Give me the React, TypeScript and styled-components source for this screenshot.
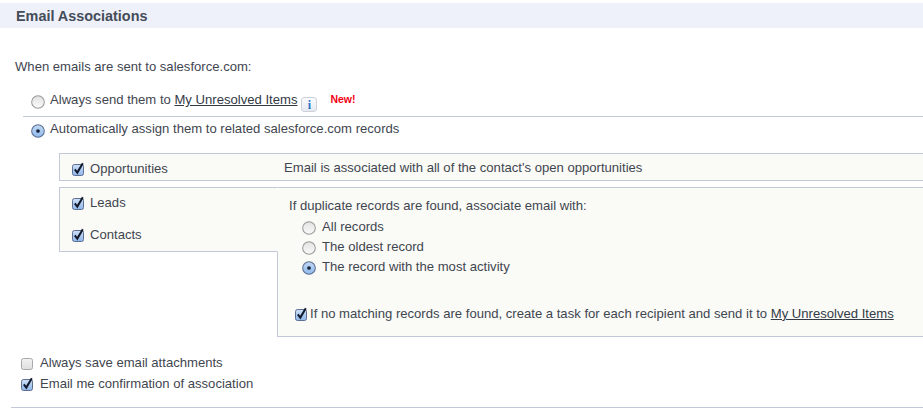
import React from 'react';
import styled, { createGlobalStyle } from 'styled-components';

const GlobalStyle = createGlobalStyle`
  html, body {
    margin: 0;
    padding: 0;
    background: #fff;
    overflow: hidden;
  }
  body {
    font-family: "Liberation Sans", Arial, sans-serif;
    font-size: 13.1px;
    color: #3f4650;
  }
`;

const borderColor = '#c3c9db';
const panelBg = '#fafaf6';

const Page = styled.div`
  width: 923px;
  height: 408px;
  padding-top: 3px;
  box-sizing: border-box;
  display: flex;
  flex-direction: column;
`;

const SectionHeader = styled.h2`
  margin: 0;
  height: 25px;
  padding-left: 16px;
  display: flex;
  align-items: center;
  background: #eef1f9;
  font-size: 14.4px;
  font-weight: bold;
  color: #444c58;
`;

const Intro = styled.p`
  margin: 31px 0 0 15px;
  height: 16px;
  line-height: 16px;
`;

const OptionsGroup = styled.div`
  margin: 17px 0 0 23px;
  display: flex;
  flex-direction: column;
  gap: 8px;
`;

const OptionRow = styled.div<{ $ruled?: boolean }>`
  display: flex;
  align-items: center;
  height: 16px;
  padding: ${p => (p.$ruled ? '4px 0 0 8px' : '0 0 0 8px')};
  border-top: ${p => (p.$ruled ? `1px solid ${borderColor}` : 'none')};
  line-height: 16px;
`;

const Link = styled.a`
  color: #333a46;
  text-decoration: underline;
`;

const InfoButton = styled.span`
  width: 14px;
  height: 13px;
  margin: 9px 0 0 4px;
  border: 1px solid #cdd2da;
  border-radius: 3px;
  background: linear-gradient(#fafbfd, #e6eaf0);
  display: flex;
  align-items: center;
  justify-content: center;
  font-family: "Liberation Serif", serif;
  font-size: 12px;
  font-weight: bold;
  color: #2a72c8;
`;

const NewBadge = styled.span`
  margin: -2px 0 0 13px;
  font-size: 10.5px;
  font-weight: bold;
  color: #f00014;
`;

const Panels = styled.div`
  margin: 16px 0 0 59px;
`;

const OpportunityPanel = styled.div`
  height: 26px;
  display: flex;
  align-items: center;
  background: ${panelBg};
  border-top: 1px solid ${borderColor};
  border-bottom: 1px solid ${borderColor};
  border-left: 1px solid ${borderColor};
`;

const OpportunityLabel = styled.div`
  width: 212px;
  margin-top: 2px;
  padding-left: 12px;
  display: flex;
  align-items: center;
  gap: 5px;
  flex-shrink: 0;
`;

const SplitPanel = styled.div`
  margin-top: 6px;
  display: flex;
  align-items: flex-start;
`;

/* sits over the left edge of the panel beside it, so the edge only shows below this block */
const RecordTypes = styled.div`
  position: relative;
  z-index: 1;
  width: 217px;
  height: 63px;
  margin-right: -1px;
  flex-shrink: 0;
  background: ${panelBg};
  border-top: 1px solid ${borderColor};
  border-left: 1px solid ${borderColor};
  border-bottom: 1px solid ${borderColor};
  border-right: 1px solid ${panelBg};
`;

const RecordType = styled.div`
  height: 16px;
  margin: 6px 0 0 12px;
  display: flex;
  align-items: center;
  gap: 5px;
  & + & {
    margin-top: 16px;
  }
`;

const DuplicateRules = styled.div`
  flex: 1;
  height: 150px;
  padding: 10px 0 0 11px;
  box-sizing: border-box;
  background: ${panelBg};
  border-top: 1px solid ${borderColor};
  border-left: 1px solid ${borderColor};
  border-bottom: 1px solid ${borderColor};
`;

const RuleTitle = styled.div`
  height: 16px;
  line-height: 16px;
`;

const RadioList = styled.div`
  margin: 4px 0 0 13px;
  display: flex;
  flex-direction: column;
  gap: 4px;
`;

const RadioItem = styled.div`
  height: 16px;
  display: flex;
  align-items: center;
  gap: 1px;
`;

const TaskRow = styled.div`
  margin: 31px 0 0 6px;
  height: 16px;
  display: flex;
  align-items: center;
  gap: 2px;
`;

const FooterOptions = styled.div`
  margin: 17px 0 0 21px;
  display: flex;
  flex-direction: column;
  gap: 5px;
`;

const FooterOption = styled.div`
  height: 16px;
  display: flex;
  align-items: center;
  gap: 6px;
`;

const BottomRule = styled.div`
  margin: auto 0 0 11px;
  height: 1px;
  background: ${borderColor};
`;

const RadioSvg = styled.svg`
  width: 14px;
  height: 14px;
  flex-shrink: 0;
  margin-right: 5px;
  margin-top: 4px;
`;

const CheckSvg = styled.svg`
  width: 13px;
  height: 14px;
  flex-shrink: 0;
  margin-top: 2px;
`;

const Radio: React.FC<{ checked?: boolean }> = ({ checked }) => (
  <RadioSvg viewBox="0 0 15 15">
    <defs>
      <linearGradient id="radioOff" x1="0" y1="0" x2="0" y2="1">
        <stop offset="0" stopColor="#e2e2e2" />
        <stop offset="1" stopColor="#fafafa" />
      </linearGradient>
      <linearGradient id="radioOn" x1="0" y1="0" x2="0" y2="1">
        <stop offset="0" stopColor="#c4d9f3" />
        <stop offset="1" stopColor="#8fb9ec" />
      </linearGradient>
    </defs>
    <circle
      cx="7.5"
      cy="7.5"
      r="6.8"
      fill={checked ? 'url(#radioOn)' : 'url(#radioOff)'}
      stroke={checked ? '#5c6f92' : '#9a9a9a'}
      strokeWidth="1.1"
    />
    {checked && <circle cx="7.5" cy="7.5" r="2" fill="#17233a" />}
  </RadioSvg>
);

const Check: React.FC<{ checked?: boolean }> = ({ checked }) => (
  <CheckSvg viewBox="0 0 13 14">
    <defs>
      <linearGradient id="checkOff" x1="0" y1="0" x2="0" y2="1">
        <stop offset="0" stopColor="#f2f2f2" />
        <stop offset="1" stopColor="#dedede" />
      </linearGradient>
      <linearGradient id="checkOn" x1="0" y1="0" x2="0" y2="1">
        <stop offset="0" stopColor="#cfe0f6" />
        <stop offset="1" stopColor="#8db6ea" />
      </linearGradient>
    </defs>
    <rect
      x="0.5"
      y="2.5"
      width="11"
      height="11"
      rx="2"
      fill={checked ? 'url(#checkOn)' : 'url(#checkOff)'}
      stroke={checked ? '#5f6f92' : '#a8a8a8'}
    />
    {checked && (
      <path d="M2.8 7.4 L5.3 10.6 L10.8 1.2" fill="none" stroke="#111a2c" strokeWidth="2" />
    )}
  </CheckSvg>
);

export default function App() {
  return (
    <Page>
      <GlobalStyle />
      <SectionHeader>Email Associations</SectionHeader>
      <Intro>When emails are sent to salesforce.com:</Intro>
      <OptionsGroup>
        <OptionRow>
          <Radio />
          <span>
            Always send them to <Link>My Unresolved Items</Link>
          </span>
          <InfoButton>i</InfoButton>
          <NewBadge>New!</NewBadge>
        </OptionRow>
        <OptionRow $ruled>
          <Radio checked />
          Automatically assign them to related salesforce.com records
        </OptionRow>
      </OptionsGroup>
      <Panels>
        <OpportunityPanel>
          <OpportunityLabel>
            <Check checked />
            Opportunities
          </OpportunityLabel>
          <span>Email is associated with all of the contact's open opportunities</span>
        </OpportunityPanel>
        <SplitPanel>
          <RecordTypes>
            <RecordType>
              <Check checked />
              Leads
            </RecordType>
            <RecordType>
              <Check checked />
              Contacts
            </RecordType>
          </RecordTypes>
          <DuplicateRules>
            <RuleTitle>If duplicate records are found, associate email with:</RuleTitle>
            <RadioList>
              <RadioItem>
                <Radio />
                All records
              </RadioItem>
              <RadioItem>
                <Radio />
                The oldest record
              </RadioItem>
              <RadioItem>
                <Radio checked />
                The record with the most activity
              </RadioItem>
            </RadioList>
            <TaskRow>
              <Check checked />
              <span>
                If no matching records are found, create a task for each recipient and send it to{' '}
                <Link>My Unresolved Items</Link>
              </span>
            </TaskRow>
          </DuplicateRules>
        </SplitPanel>
      </Panels>
      <FooterOptions>
        <FooterOption>
          <Check />
          Always save email attachments
        </FooterOption>
        <FooterOption>
          <Check checked />
          Email me confirmation of association
        </FooterOption>
      </FooterOptions>
      <BottomRule />
    </Page>
  );
}
